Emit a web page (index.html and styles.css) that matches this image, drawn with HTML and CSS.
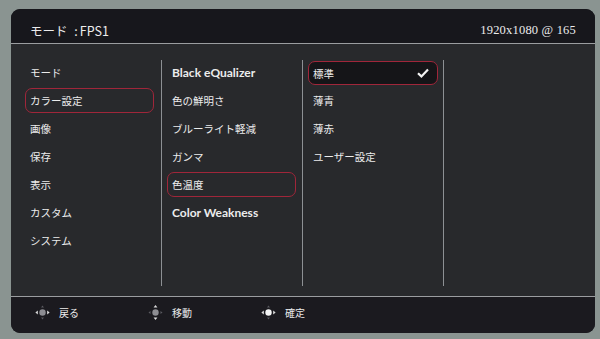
FILE: index.html
```html
<!DOCTYPE html>
<html lang="ja">
<head>
    <meta charset="UTF-8">
    <meta name="viewport" content="width=device-width, initial-scale=1.0">
    <title>OSD メニュー</title>
    <link rel="stylesheet" href="styles.css">
</head>
<body>

<div class="osd">
    <header class="osd-header">
        <span class="mode">モード <span class="sep">:</span>FPS1</span>
        <span class="resolution">1920x1080 @ 165</span>
    </header>

    <main class="osd-body">
        <ul class="col col-main">
            <li class="item">モード</li>
            <li class="item active">カラー設定</li>
            <li class="item">画像</li>
            <li class="item">保存</li>
            <li class="item">表示</li>
            <li class="item">カスタム</li>
            <li class="item">システム</li>
        </ul>
        <ul class="col col-sub">
            <li class="item latin">Black eQualizer</li>
            <li class="item">色の鮮明さ</li>
            <li class="item">ブルーライト軽減</li>
            <li class="item">ガンマ</li>
            <li class="item active">色温度</li>
            <li class="item latin">Color Weakness</li>
        </ul>
        <ul class="col col-opt">
            <li class="item active selected">標準
                <svg class="check" viewBox="0 0 12 10" width="12" height="10">
                    <path d="M1 5.2 L4.4 8.4 L11 1.6" fill="none" stroke="#f4f4f4" stroke-width="2.2"/>
                </svg>
            </li>
            <li class="item">薄青</li>
            <li class="item">薄赤</li>
            <li class="item">ユーザー設定</li>
        </ul>
        <div class="col col-empty"></div>
    </main>

    <footer class="osd-footer">
        <div class="hint">
            <svg class="pad" viewBox="0 0 16 16" width="17" height="17">
                <circle cx="8" cy="8" r="3" fill="#8d8d92"/>
                <path d="M1.3 8 L3.6 6.2 L3.6 9.8Z M14.7 8 L12.4 6.2 L12.4 9.8Z" fill="#dcdcdc"/>
                <path d="M8 1.4 L6.6 3.3 L9.4 3.3Z M8 14.6 L6.6 12.7 L9.4 12.7Z" fill="#5a5a60"/>
            </svg>
            <span>戻る</span>
        </div>
        <div class="hint">
            <svg class="pad" viewBox="0 0 16 16" width="17" height="17">
                <circle cx="8" cy="8" r="3" fill="#8d8d92"/>
                <path d="M1.4 8 L3.3 6.6 L3.3 9.4Z M14.6 8 L12.7 6.6 L12.7 9.4Z" fill="#5a5a60"/>
                <path d="M8 1 L6.2 3.4 L9.8 3.4Z M8 15 L6.2 12.6 L9.8 12.6Z" fill="#dcdcdc"/>
            </svg>
            <span>移動</span>
        </div>
        <div class="hint">
            <svg class="pad" viewBox="0 0 16 16" width="17" height="17">
                <circle cx="8" cy="8" r="3" fill="#f4f4f4"/>
                <path d="M1.3 8 L3.6 6.2 L3.6 9.8Z M14.7 8 L12.4 6.2 L12.4 9.8Z" fill="#dcdcdc"/>
                <path d="M8 1.4 L6.6 3.3 L9.4 3.3Z M8 14.6 L6.6 12.7 L9.4 12.7Z" fill="#5a5a60"/>
            </svg>
            <span>確定</span>
        </div>
    </footer>
</div>

</body>
</html>
```

FILE: styles.css
```css
/* Fondo: la foto del monitor */
body {
    margin: 0;
    padding: 9px 0 0 11px;
    background-color: #8a9491;
    font-family: "Noto Sans CJK JP", "Noto Sans", sans-serif;
    color: #ececec;
}

/* Panel del OSD */
.osd {
    width: 584px;
    height: 324px;
    border-radius: 9px;
    overflow: hidden;
    background-color: #28292c;
    display: flex;
    flex-direction: column;
}

/* Cabecera */
.osd-header {
    height: 35px;
    box-sizing: border-box;
    padding: 8px 19px 0;
    background-color: #17171c;
    border-bottom: 1px solid #9b9da0;
    display: flex;
    align-items: center;
    justify-content: space-between;
    font-size: 12.5px;
}

.mode {
    font-family: "Noto Sans CJK JP", sans-serif;
}

.sep {
    margin: 0 2px 0 4px;
}

.resolution {
    font-family: "Liberation Serif", serif;
    font-size: 12.5px;
    letter-spacing: 0.2px;
}

/* Columnas del menú */
.osd-body {
    height: 253px;
    box-sizing: border-box;
    padding: 16px 0 10px;
    border-bottom: 1px solid #9b9da0;
    display: flex;
}

.col {
    list-style: none;
    margin: 0;
    padding: 0;
    box-sizing: border-box;
}

.col-main {
    width: 150px;
    padding: 0 7px 0 14px;
}

.col-sub,
.col-opt {
    width: 141px;
    border-left: 1px solid #8d9094;
    padding: 0 6px 0 5px;
}

.col-opt {
    padding-right: 5px;
}

.col-empty {
    flex: 1;
    border-left: 1px solid #8d9094;
}

.item {
    height: 25px;
    margin-bottom: 3px;
    padding: 0 4px;
    box-sizing: border-box;
    display: flex;
    align-items: center;
    justify-content: space-between;
    font-size: 10.5px;
    border: 1px solid transparent;
    border-radius: 7px;
}

.item.active {
    border-color: #a0263a;
}

.item.selected {
    background-color: #151518;
    height: 24px;
    margin-top: 1px;
}

.item.latin {
    font-family: "Lato", "Noto Sans", sans-serif;
    font-weight: bold;
    font-size: 12px;
}

.check {
    margin-right: 4px;
}

/* Pie con los botones */
.osd-footer {
    flex: 1;
    background-color: #1b1a1f;
    padding: 0 0 6px 23px;
    display: flex;
    align-items: center;
}

.hint {
    width: 113px;
    display: flex;
    align-items: center;
    gap: 8px;
    font-size: 10px;
}
```
